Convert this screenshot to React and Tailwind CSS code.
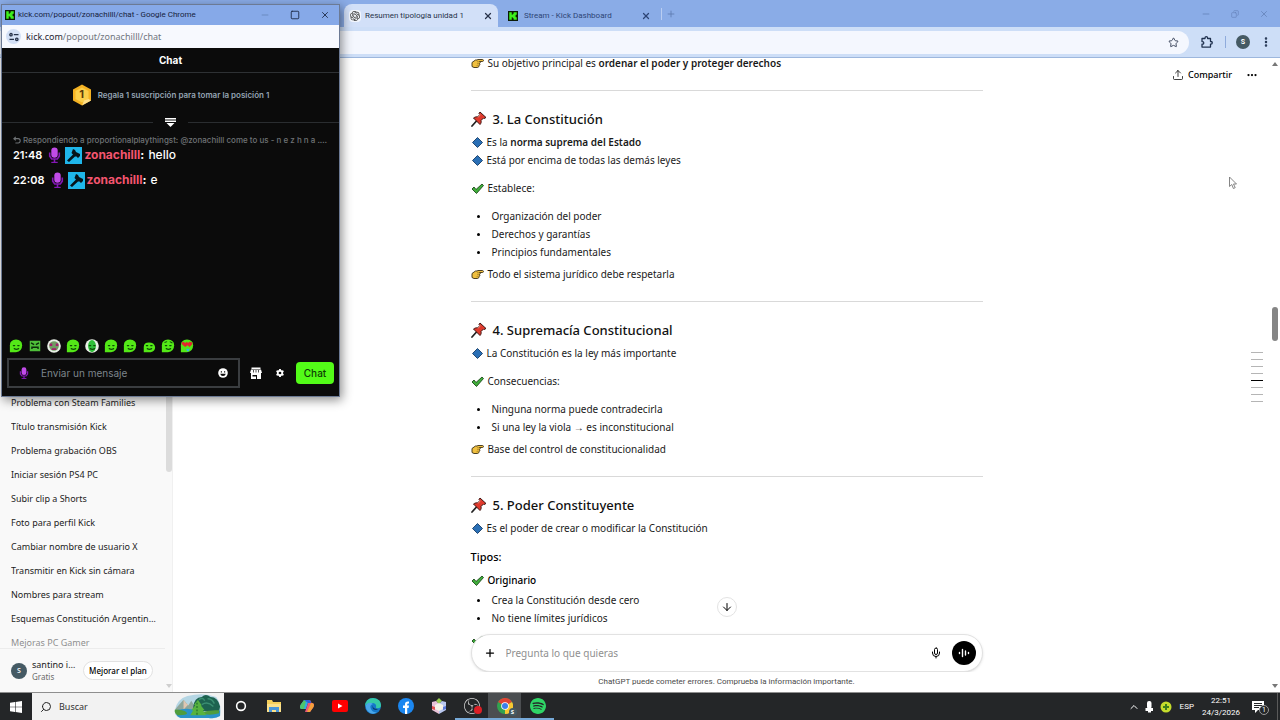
import React, { useState } from 'react';
import { ArrowDown, ChevronUp, Minus, Plus, Square, Star, Upload, X, Mic, Ellipsis, EllipsisVertical, Search, Copy } from 'lucide-react';
import { SiObsstudio, SiOpenai, SiSpotify } from 'react-icons/si';

const chats = [
    'Problema con Steam Families',
    'Título transmisión Kick',
    'Problema grabación OBS',
    'Iniciar sesión PS4 PC',
    'Subir clip a Shorts',
    'Foto para perfil Kick',
    'Cambiar nombre de usuario X',
    'Transmitir en Kick sin cámara',
    'Nombres para stream',
    'Esquemas Constitución Argentina 1853',
    'Mejoras PC Gamer',
];

const messages = [
    { time: '21:48', user: 'zonachilll', text: 'hello', reply: 'Respondiendo a proportionalplaythingst: @zonachilll come to us - n e z h n a . com' },
    { time: '22:08', user: 'zonachilll', text: 'e' },
];

const emotes = ['flat', 'box', 'clown', 'flat', 'phones', 'smile', 'smile', 'small', 'think', 'love'];

/* ---------- icons ---------- */

const KickLogo = ({ className }) => (
    <svg viewBox="0 0 16 16" className={className} aria-hidden="true">
        <rect width="16" height="16" fill="#0b1a06" />
        <path d="M2 2h4v4h1.5V4.500H9V2h5v4h-1.500v1.500H11v1h1.500V10H14v4H9v-2.500H7.500V10H6v4H2z" fill="#3df01d" />
    </svg>
);

const Hand = () => (
    <svg viewBox="0 0 26 24" className="h-3 w-[13px] shrink-0" aria-hidden="true">
        <path d="M2 11l7-5h3l2-1h9c2.500 0 2.500 4 0 4h-6c2 .5 2 3.500 0 4 1 1 1 3.500-1 4 0 2-1 4-3 4H6l-4-2z" fill="#f0c040" stroke="#3a2f14" strokeWidth="1.800" strokeLinejoin="round" />
        <path d="M12 9.500h5M12 13.500h4M11 17.500h4" stroke="#8a6a1a" strokeWidth="1.200" />
    </svg>
);

const Pin = () => (
    <svg viewBox="0 0 32 32" className="size-4 shrink-0" aria-hidden="true">
        <path d="M11 20L2 30" stroke="#222" strokeWidth="3.500" strokeLinecap="round" />
        <path d="M18 2l12 11-4 2-1-1-5 5c1 3 0 6-2 8L5 14c3-2 6-3 8-2l5-5-2-2z" fill="#e0392c" stroke="#3a1512" strokeWidth="2" strokeLinejoin="round" />
        <path d="M19 7l-5 6" stroke="#ff8a78" strokeWidth="2" />
    </svg>
);

const Diamond = () => (
    <svg viewBox="0 0 22 22" className="ml-px size-[11px] shrink-0" aria-hidden="true">
        <path d="M11 1l10 10-10 10L1 11z" fill="#2a6fb5" stroke="#163c66" strokeWidth="1.800" strokeLinejoin="round" />
    </svg>
);

const Check = () => (
    <svg viewBox="0 0 26 22" className="h-[11px] w-[13px] shrink-0" aria-hidden="true">
        <path d="M2 12l4-4 4 5L22 2l3 3-14 16z" fill="#3fae3a" stroke="#1d4a1b" strokeWidth="1.800" strokeLinejoin="round" />
    </svg>
);

const ReplyIcon = () => (
    <svg viewBox="0 0 10 10" className="size-2 shrink-0" fill="none" stroke="currentColor" strokeWidth="1.300" aria-hidden="true">
        <path d="M3.500 1L1 3.300l2.500 2.300M1 3.300h5.500q2.500 0 2.500 2.700t-2.500 2.700H3" />
    </svg>
);

const StreamerBadge = ({ className }) => (
    <svg viewBox="0 0 16 20" className={className} aria-hidden="true">
        <path d="M1 7v5l3 4h3v4h2v-4h3l3-4V7h-2v4l-2 3H5l-2-3V7z" fill="#8417b5" />
        <rect x="4" y="0.500" width="8" height="13" rx="4" fill="#c14be8" />
        <path d="M4 18.500h8V20H4z" fill="#8417b5" />
    </svg>
);

const ModBadge = () => (
    <svg viewBox="0 0 17 17" className="size-[17px] shrink-0" aria-hidden="true">
        <rect width="17" height="17" fill="#1fb6ea" />
        <path d="M8 2l2 1 1 2 4 2v2l-2 2-1.500-1.500L10 9.500 4 15l-2-1.500L8 7.500 6.500 6z" fill="#06131a" />
    </svg>
);

const RankBadge = () => (
    <svg viewBox="0 0 20 22" className="h-[22px] w-5" aria-hidden="true">
        <path d="M10 0.500l9 5v11l-9 5-9-5v-11z" fill="#f4b223" />
        <path d="M10 3.500l6.500 3.500v8L10 18.500 3.500 15V7z" fill="#fbcf4a" />
        <path d="M19 16.500l-9 5 2-5 4.500-1.500z" fill="#ffe08a" />
    </svg>
);

function Emote({ kind }) {
    const body = kind === 'small'
        ? <path d="M2 15V9q0-5 6-5t7 5q0 5-5 6z" fill="#53e817" />
        : kind === 'box'
            ? <path d="M2 2h12v12H2z" fill="#4fbf3a" />
            : <path d="M1 15V7q0-6 7-6.500Q15 1 15 7q0 7-7 8z" fill="#53e817" />;
    return (
        <svg viewBox="0 0 16 16" className="size-[14px]" aria-hidden="true">
            {(kind === 'clown' || kind === 'phones') && <circle cx="8" cy="8" r="7.800" fill="#e8efe6" />}
            {kind === 'clown' ? <circle cx="8" cy="8" r="5.500" fill="#6f9d63" /> : kind === 'phones' ? <ellipse cx="8" cy="8" rx="4.500" ry="7" fill="#2fbf3a" /> : body}
            {kind === 'love' && <path d="M2 4l2-1 2 1.500L8 3l1 1.500L11 3l3 1v2l-3 3-2.500-2L6 9 2 6z" fill="#e3262e" />}
            {kind === 'love' && <path d="M7 11h4l-1 3H8z" fill="#35b9d8" />}
            {kind === 'clown' && <path d="M3 5h3v3H3zM10 5h3v3h-3zM5.500 10.500h5v2h-5z" fill="#a21d6c" />}
            {kind === 'box' && <path d="M3.500 4.500l3.500 2M12.500 4.500L9 6.500M4.500 11.500v-2h7v2" stroke="#0b2b08" strokeWidth="1.600" fill="none" />}
            {!['love', 'clown', 'box'].includes(kind) && <path d="M5 7.500h1.500M10 7.500h1.500M6 11q2.500 1.500 5 0" stroke="#0d4a06" strokeWidth="1.400" fill="none" strokeLinecap="round" />}
            {kind === 'think' && <path d="M4 4l3-1M10 3l3 1.500" stroke="#0d4a06" strokeWidth="1.200" />}
        </svg>
    );
}

const SmileIcon = () => (
    <svg viewBox="0 0 10 10" className="size-[10px]" aria-hidden="true">
        <circle cx="5" cy="5" r="4.800" fill="#fff" />
        <path d="M2.800 3.200h1.200v1.200H2.800zM6 3.200h1.200v1.200H6zM2.200 5.700h5.600Q7.300 8 5 8T2.200 5.700z" fill="#0b0b0b" />
    </svg>
);

const ShopIcon = () => (
    <svg viewBox="0 0 12 12" className="size-3" aria-hidden="true">
        <path d="M1.500 0.500h9V2h-9zM1 2.500h10l1 3.500h-1v6H7V8H5v0H2.500v1.500H6V12H1V6H0z" fill="#fff" />
        <path d="M3.500 3v2.500M6 3v2.500M8.500 3v2.500" stroke="#0b0b0b" strokeWidth="0.700" />
    </svg>
);

const GearIcon = () => (
    <svg viewBox="0 0 10 10" className="size-2" aria-hidden="true">
        <path d="M4 0h2l.4 1.400 1 .5L8.800 1.500l1 1.700L8.800 4.300v1.400l1 1.100-1 1.700-1.400-.4-1 .5L6 10H4l-.4-1.400-1-.5-1.400.4-1-1.700 1-1.100V4.300l-1-1.100 1-1.700 1.400.4 1-.5z" fill="#fff" />
        <circle cx="5" cy="5" r="1.700" fill="#0b0b0b" />
    </svg>
);

const PuzzleIcon = () => (
    <svg viewBox="0 0 12 12" className="size-3" fill="none" stroke="#20324f" strokeWidth="1.300" aria-hidden="true">
        <path d="M1 2.500h3V2a1.300 1.300 0 0 1 2.600 0v.5H9.500V5.500H10a1.300 1.300 0 0 1 0 2.600h-.5v3H1V8.200h.5a1.300 1.300 0 0 0 0-2.600H1z" strokeLinejoin="round" />
    </svg>
);

const SiteInfoIcon = () => (
    <svg viewBox="0 0 10 10" className="size-2.5" fill="none" stroke="#26324a" strokeWidth="1.300" aria-hidden="true">
        <circle cx="2" cy="2.700" r="1.200" /><path d="M4.800 2.700H9.500M0.500 7.300h4.500" /><circle cx="7.800" cy="7.300" r="1.200" />
    </svg>
);

/* ---------- browser ---------- */

function Tab({ title, icon, active }) {
    return (
        <div className={active
            ? 'flex h-[23px] w-[154px] items-center self-end rounded-t-lg bg-[#d2e0f8] px-[5px] text-[#28334a]'
            : 'flex h-[23px] w-[163px] items-center self-end px-2.5 text-[#2d4576]'}>
            {icon}
            <span className="min-w-0 flex-1 truncate text-[8px]">{title}</span>
            <button aria-label="Cerrar pestaña"><X className="size-2.5" strokeWidth={3} /></button>
        </div>
    );
}

function BrowserBar() {
    return (
        <header className="shrink-0 font-[Roboto,sans-serif]">
            <div className="flex h-[27px] items-center bg-[#8aace7] pl-[344px]">
                <Tab active title="Resumen tipología unidad 1" icon={<span className="mr-1 flex size-3 shrink-0 items-center justify-center rounded-sm bg-white/70"><SiOpenai className="size-2.5 text-[#333]" /></span>} />
                <Tab title="Stream - Kick Dashboard" icon={<KickLogo className="mr-1.5 size-2.5 shrink-0" />} />
                <span className="h-3 w-px bg-[#b9cdf2]" />
                <button className="ml-1 text-[#5f7bb0]" aria-label="Nueva pestaña"><Plus className="size-2.5" /></button>
                <div className="ml-auto flex items-center gap-5 pr-[11px] text-[#6684bb]">
                    <button aria-label="Minimizar"><Minus className="size-2.5" /></button>
                    <button aria-label="Restaurar"><Copy className="size-2 -scale-x-100" /></button>
                    <button aria-label="Cerrar"><X className="size-2.5" /></button>
                </div>
            </div>
            <div className="flex h-[31px] items-center border-b border-[#9db7dd] bg-[#cddef7] pt-1 pr-2 pb-1">
                <div className="flex h-[23px] flex-1 items-center justify-end rounded-r-full bg-[#f4f7fe] pr-2.5">
                    <button aria-label="Añadir a marcadores"><Star className="size-[11px] text-[#333e55]" /></button>
                </div>
                <button className="ml-3" aria-label="Extensiones"><PuzzleIcon /></button>
                <span className="ml-3 h-3 w-px bg-[#8fabdc]" />
                <button className="ml-2.5 size-[14px] rounded-full bg-[#455a64] text-[7px] leading-[14px] font-bold text-white">S</button>
                <button className="ml-2.5 text-[#20324f]" aria-label="Menú"><EllipsisVertical className="size-3" strokeWidth={3} /></button>
            </div>
        </header>
    );
}

function Sidebar() {
    return (
        <aside className="flex w-[173px] shrink-0 bg-[#f9f9f9]">
            <div className="flex min-w-0 flex-1 flex-col">
                <div className="flex min-h-0 flex-1 flex-col justify-end overflow-hidden">
                    <ul className="-mb-[7px] shrink-0">
                        {chats.map((chat) => (
                            <li key={chat} className="h-6 pr-2 pl-[11px] last:opacity-50">
                                <a href="#" className="block truncate text-[9px] leading-6 text-[#1c1c1c]">{chat}</a>
                            </li>
                        ))}
                    </ul>
                </div>
                <div className="flex h-11 items-center border-t border-[#ececec] pl-[11px]">
                    <span className="size-4 shrink-0 rounded-full bg-[#455a64] text-center text-[7px] leading-4 font-semibold text-white">S</span>
                    <div className="ml-[5px] w-[46px]">
                        <p className="truncate text-[9px] leading-3 text-[#1c1c1c]">santino ibarra</p>
                        <p className="text-[8px] leading-3 text-[#6b6b6b]">Gratis</p>
                    </div>
                    <button className="ml-[5px] h-[19px] w-[70px] shrink-0 rounded-full border border-[#e2e2e2] bg-white text-[8px] font-medium whitespace-nowrap text-black">Mejorar el plan</button>
                </div>
            </div>
            <div className="flex w-2 flex-col items-center justify-between border-r border-[#f0f0f0] pb-1">
                <div className="h-[414px] w-1.5 rounded-b-full bg-[#dcdcdc]" />
                <span className="border-x-[3px] border-t-4 border-x-transparent border-t-[#cfcfcf]" />
            </div>
        </aside>
    );
}

const Line = ({ icon, children }) => (
    <span className="flex items-center gap-1">{icon}<span>{children}</span></span>
);
const Heading = ({ children }) => (
    <h2 className="mb-0.5 flex items-center gap-1.5 text-[13px] leading-6 font-medium text-[#111]"><Pin />{children}</h2>
);
const List = ({ items, className }) => (
    <ul className={className}>
        {items.map((item) => (
            <li key={item} className="flex items-center gap-3 pl-1.5"><span className="size-[3px] rounded-full bg-black" />{item}</li>
        ))}
    </ul>
);
const Rule = () => <hr className="mt-[18px] mb-4 border-[#d9d9d9]" />;

function Article() {
    return (
        <article className="mx-auto -mt-1 w-full max-w-[512px] text-[10px] leading-[18px] text-[#1a1a1a]">
            <Line icon={<Hand />}>Su objetivo principal es <b className="font-semibold">ordenar el poder y proteger derechos</b></Line>
            <Rule />
            <Heading>3. La Constitución</Heading>
            <Line icon={<Diamond />}>Es la <b className="font-semibold">norma suprema del Estado</b></Line>
            <Line icon={<Diamond />}>Está por encima de todas las demás leyes</Line>
            <p className="mt-2.5"><Line icon={<Check />}>Establece:</Line></p>
            <List className="mt-2.5 mb-1" items={['Organización del poder', 'Derechos y garantías', 'Principios fundamentales']} />
            <Line icon={<Hand />}>Todo el sistema jurídico debe respetarla</Line>
            <Rule />
            <Heading>4. Supremacía Constitucional</Heading>
            <Line icon={<Diamond />}>La Constitución es la ley más importante</Line>
            <p className="mt-2.5"><Line icon={<Check />}>Consecuencias:</Line></p>
            <List className="mt-2.5 mb-1" items={['Ninguna norma puede contradecirla', 'Si una ley la viola → es inconstitucional']} />
            <Line icon={<Hand />}>Base del control de constitucionalidad</Line>
            <Rule />
            <Heading>5. Poder Constituyente</Heading>
            <Line icon={<Diamond />}>Es el poder de crear o modificar la Constitución</Line>
            <h3 className="mt-2.5 mb-1 text-[11px] leading-5 font-medium text-black">Tipos:</h3>
            <p className="font-medium text-black"><Line icon={<Check />}>Originario</Line></p>
            <List className="mt-0.5 mb-1" items={['Crea la Constitución desde cero', 'No tiene límites jurídicos']} />
            <p className="font-medium text-black"><Line icon={<Check />}>Derivado</Line></p>
        </article>
    );
}

function Composer() {
    const [prompt, setPrompt] = useState('');
    return (
        <div className="absolute inset-x-0 bottom-0 flex flex-col items-center">
            <button className="mb-[17px] flex size-5 items-center justify-center rounded-full border border-[#e3e3e3] bg-white" aria-label="Bajar"><ArrowDown className="size-3" /></button>
            <form className="flex h-[38px] w-full max-w-[512px] items-center rounded-full border border-[#e2e2e2] bg-white pr-1.5 pl-3 shadow-sm" onSubmit={(e) => e.preventDefault()}>
                <button type="button" aria-label="Adjuntar"><Plus className="size-3" strokeWidth={2.5} /></button>
                <input
                    value={prompt}
                    onChange={(e) => setPrompt(e.target.value)}
                    aria-label="Pregunta lo que quieras"
                    placeholder="Pregunta lo que quieras"
                    className="ml-2.5 min-w-0 flex-1 bg-transparent text-[10px] outline-none placeholder:text-[#8f8f8f]"
                />
                <button type="button" aria-label="Dictar"><Mic className="size-3" /></button>
                <button type="button" className="ml-2.5 flex size-6 items-center justify-center rounded-full bg-black" aria-label="Modo de voz">
                    <svg viewBox="0 0 12 12" className="size-3" stroke="#fff" strokeWidth="1.400" strokeLinecap="round"><path d="M1.500 5.500v1M4.500 2.500v7M7.500 4v4M10.500 5.500v1" /></svg>
                </button>
            </form>
            <p className="flex h-5 w-full items-center justify-center bg-white font-[Roboto,sans-serif] text-[8px] text-[#4a4a4a]">ChatGPT puede cometer errores. Comprueba la información importante.</p>
        </div>
    );
}

function Main() {
    return (
        <main className="relative min-w-0 flex-1 overflow-hidden bg-white">
            <Article />
            <Composer />
            <div className="absolute top-2.5 right-[22px] flex items-center gap-3.5">
                <button className="flex items-center gap-1 text-[9px] font-medium text-black"><Upload className="size-3" strokeWidth={1.5} />Compartir</button>
                <button aria-label="Más opciones"><Ellipsis className="size-3" strokeWidth={2.5} /></button>
            </div>
            <div className="absolute top-[294px] right-[17px] flex flex-col gap-[6px]">
                {[0, 1, 2, 3, 4, 5, 6, 7].map((n) => (
                    <span key={n} className={n === 4 ? 'h-px w-3 bg-black' : 'h-px w-3 bg-[#b5b5b5]'} />
                ))}
            </div>
            <div className="absolute inset-y-0 right-0 flex w-2.5 flex-col items-center pt-1 pb-1">
                <span className="border-x-[3px] border-b-4 border-x-transparent border-b-[#777]" />
                <div className="mt-[241px] h-[34px] w-1.5 rounded-full bg-[#858585]" />
                <span className="mt-auto border-x-[3px] border-t-4 border-x-transparent border-t-[#777]" />
            </div>
            <svg viewBox="0 0 10 14" className="absolute top-[118px] right-[42px] h-3.5 w-2.5" fill="#fff" stroke="#777" strokeWidth="0.900" aria-hidden="true">
                <path d="M1.500 1v9.500l2.300-2 1.600 4 1.800-.8-1.700-3.700h3z" />
            </svg>
        </main>
    );
}

/* ---------- kick chat popout ---------- */

function ChatPopup() {
    const [text, setText] = useState('');
    return (
        <section className="absolute top-1 left-px flex h-[393px] w-[339px] flex-col border border-[#6c7a94] bg-[#0b0b0b] font-[Inter,sans-serif] text-white shadow-[2px_3px_10px_rgba(0,0,0,0.45)]">
            <div className="flex h-5 shrink-0 items-center bg-[#86a9e8] px-[3px] font-[Roboto,sans-serif] text-[#17233d]">
                <KickLogo className="size-2.5" />
                <span className="ml-[3px] flex-1 text-[8px]">kick.com/popout/zonachilll/chat - Google Chrome</span>
                <div className="flex items-center gap-5 pr-1.5">
                    <button aria-label="Minimizar"><Minus className="size-2.5 text-[#6684bb]" /></button>
                    <button aria-label="Maximizar"><Square className="size-2.5" /></button>
                    <button aria-label="Cerrar"><X className="size-2.5" /></button>
                </div>
            </div>
            <div className="flex h-[23px] shrink-0 items-center bg-[#f7f9fe] px-1 font-['Noto_Sans',sans-serif]">
                <span className="flex size-[15px] items-center justify-center rounded-full bg-[#d3e0f6]"><SiteInfoIcon /></span>
                <span className="ml-[5px] text-[9px] text-[#70757d]"><span className="text-[#1d2330]">kick.com</span>/popout/zonachilll/chat</span>
            </div>
            <h1 className="h-[25px] shrink-0 border-b border-[#2e3134] text-center text-[10px] leading-6 font-bold">Chat</h1>
            <div className="flex h-[43px] shrink-0 items-center justify-center gap-1.5">
                <span className="grid place-items-center *:col-start-1 *:row-start-1">
                    <RankBadge />
                    <span className="text-[11px] font-bold text-[#5a3908]">1</span>
                </span>
                <p className="text-[8px] font-semibold text-[#94a3b3]">Regala 1 suscripción para tomar la posición 1</p>
            </div>
            <div className="flex h-3 shrink-0 items-center gap-3">
                <span className="h-px flex-1 bg-[#2a2d30]" />
                <svg viewBox="0 0 11 9" className="h-[9px] w-[11px]" fill="#fff" aria-hidden="true"><path d="M0 0h11v1.500H0zM0 2.500h11V4H0zM1.500 5h8l-4 4z" /></svg>
                <span className="h-px flex-1 bg-[#2a2d30]" />
            </div>
            <ul className="flex min-h-0 flex-1 flex-col gap-[7px] px-[11px] pt-1.5">
                {messages.map((m) => (
                    <li key={m.time}>
                        {m.reply && (
                            <p className="flex items-center gap-0.5 text-[8px] leading-3 font-medium text-[#6f7376]">
                                <ReplyIcon />
                                <span className="truncate">{m.reply}</span>
                            </p>
                        )}
                        <p className="flex items-center text-xs leading-[18px] font-medium">
                            <span className="text-[11px] font-semibold">{m.time}</span>
                            <StreamerBadge className="mr-1 ml-1.5 h-4 w-[13px]" />
                            <ModBadge />
                            <span className="ml-0.5 font-bold text-[#f4556f]">{m.user}</span>
                            <span className="mr-1 font-bold">:</span>{m.text}
                        </p>
                    </li>
                ))}
            </ul>
            <div className="flex h-5 shrink-0 items-center gap-[5px] px-[7px]">
                {emotes.map((kind, i) => <button key={i} aria-label={`Emote ${i + 1}`}><Emote kind={kind} /></button>)}
            </div>
            <form className="flex shrink-0 items-center pt-0.5 pr-[5px] pb-2 pl-[5px]" onSubmit={(e) => e.preventDefault()}>
                <div className="flex h-[30px] min-w-0 flex-1 items-center border-2 border-[#3a3d40] px-2.5">
                    <StreamerBadge className="h-3 w-2.5" />
                    <input
                        value={text}
                        onChange={(e) => setText(e.target.value)}
                        aria-label="Enviar un mensaje"
                        placeholder="Enviar un mensaje"
                        className="ml-3 min-w-0 flex-1 bg-transparent text-[10px] outline-none placeholder:text-[#7d858c]"
                    />
                    <button type="button" aria-label="Emotes"><SmileIcon /></button>
                </div>
                <button type="button" className="ml-2.5" aria-label="Tienda"><ShopIcon /></button>
                <button type="button" className="ml-3.5" aria-label="Ajustes"><GearIcon /></button>
                <button className="ml-3 h-[22px] w-[38px] rounded-sm bg-[#53fc18] text-[10px] font-medium text-[#0d3d05]">Chat</button>
            </form>
        </section>
    );
}

/* ---------- taskbar ---------- */

const apps = [
    { name: 'Cortana', icon: <svg viewBox="0 0 16 16" className="size-3.5"><circle cx="8" cy="8" r="5" fill="none" stroke="#fff" strokeWidth="1.800" /></svg> },
    { name: 'Explorador', icon: <svg viewBox="0 0 16 16" className="size-4"><path d="M1 2h5l1 2h8v10H1z" fill="#f5cf5b" /><path d="M1 6h14v8H1z" fill="#fbe08a" /><path d="M3 14V9h10v5h-3v-2H6v2z" fill="#4a96d9" /></svg> },
    { name: 'Copilot', icon: <svg viewBox="0 0 16 16" className="size-4"><path d="M5 2h5l-3 9H3Q0 11 1.500 7z" fill="#2fa8e8" /><path d="M1.500 7L5 2l2 1-2 8H3Q0 11 1.500 7z" fill="#4dc36b" /><path d="M10 2q2 0 2.500 3H13q3 0 1.500 4L11 14H6l3-9z" fill="#e8557a" /><path d="M12 5q4 0 2.500 4L11 14H8z" fill="#f6a13a" /><path d="M5 2h5q2 0 2 3H9z" fill="#2c5fd8" /></svg> },
    { name: 'YouTube', icon: <svg viewBox="0 0 16 12" className="h-3 w-4"><rect width="16" height="12" rx="2" fill="#f00" /><path d="M6 3.500v5l4.500-2.500z" fill="#fff" /></svg> },
    { name: 'Edge', icon: <svg viewBox="0 0 16 16" className="size-4"><circle cx="8" cy="8" r="8" fill="#1577c9" /><path d="M0 8q1-8 8-8 8 1 8 7 0 4-5 3 1-5-4-5Q2 5 0 8z" fill="#35c9a6" /><path d="M1 7q3-4 7-1-4 1-2 5 2 4 6 3-3 3-7 1Q0 12 1 7z" fill="#4aa7ea" /><path d="M8 7q-1 4 5 4-2 2-5 0-1-2 0-4z" fill="#0b3a6e" /></svg> },
    { name: 'Facebook', icon: <svg viewBox="0 0 16 16" className="size-4"><circle cx="8" cy="8" r="8" fill="#1b87f0" /><path d="M7 16v-6H5V7.500h2V6q0-3 4-2.500v2q-2-.3-1.800 1v1H11l-.4 2.500H9.200V16z" fill="#fff" /></svg> },
    { name: 'Apps', icon: <svg viewBox="0 0 16 16" className="size-4"><path d="M8 0l3 3-3 3-3-3z" fill="#9ad04f" /><path d="M1 4l4-1 3 3v10l-7-4z" fill="#e9c3d8" /><path d="M15 4l-4-1-3 3v10l7-4z" fill="#b9c7ef" /><path d="M8 5l4 2v4l-4 2-4-2V7z" fill="#f7f3e8" /><path d="M1 8l3 1v3l-3-1z" fill="#df5050" /><path d="M15 8l-3 1v3l3-1z" fill="#5a78d8" /></svg> },
    { name: 'OBS', running: true, icon: <span className="relative"><SiObsstudio className="size-4 text-[#d8d8d8]" /><span className="absolute -right-0.5 bottom-0 size-2 rounded-full bg-[#dc1f26]" /></span> },
    { name: 'Chrome', running: true, active: true, icon: <span className="relative"><svg viewBox="0 0 16 16" className="size-4"><circle cx="8" cy="8" r="8" fill="#32a350" /><path d="M8 8L1.100 4A8 8 0 0 1 15 4z" fill="#e04335" /><path d="M8 8l7-4a8 8 0 0 1-7 12z" fill="#f9c831" /><circle cx="8" cy="8" r="3.800" fill="#fff" /><circle cx="8" cy="8" r="3" fill="#3c7fec" /></svg><span className="absolute -right-1 -bottom-0.5 size-2 rounded-full bg-[#455a64] text-center text-[6px] leading-2 font-bold text-white">S</span></span> },
    { name: 'Spotify', running: true, icon: <SiSpotify className="size-4 text-[#2fd566]" /> },
];

function Taskbar() {
    return (
        <footer className="flex h-7 shrink-0 items-stretch border-t border-[#8e8e8e] bg-[#242628] text-white">
            <button className="flex w-8 items-center justify-center" aria-label="Inicio">
                <svg viewBox="0 0 12 12" className="size-3" fill="#fff"><path d="M0 1.800l5-.7v4.600H0zM5.600 1l6.400-.9v5.600H5.600zM0 6.300h5v4.600l-5-.7zM5.600 6.300H12v5.600l-6.400-.9z" /></svg>
            </button>
            <div className="flex w-48 items-center bg-[#f2f2f2] pl-2 text-[#222]">
                <Search className="size-3 -scale-x-100" />
                <input aria-label="Buscar" placeholder="Buscar" className="ml-[7px] min-w-0 flex-1 bg-transparent text-[9px] outline-none placeholder:text-[#333]" />
                <svg viewBox="0 0 50 26" className="mr-0.5 h-[25px] w-[50px]" aria-hidden="true">
                    <path d="M2 17Q4 5 15 2q17-4 30 1 6 8 4 19-4 4-12 3H8q-7-2-6-8z" fill="#b5d6e4" />
                    <path d="M3 15l8-9 5 6 3-5 6 9-4 5H3z" fill="#8fa69b" />
                    <path d="M11 6l3 4 2 1-5 5z" fill="#dfc6b2" />
                    <path d="M21 14Q22 3 30 3q4-4 9 0 8 0 10 10l-1 5H21z" fill="#1d6350" />
                    <path d="M27 6q4-3 6 1M36 5q5 0 7 5M30 11q6-4 12 2" stroke="#3b8f72" strokeWidth="1.500" fill="none" />
                    <path d="M3 17q14-4 24 1t22-1v6q-4 3-12 2H8q-5-1-5-8z" fill="#2a93c9" />
                    <path d="M2 16q9 0 12 3t-9 3q-4-2-3-6zM28 20q9-4 20-3v3q-10 3-20 0z" fill="#4f9d3d" />
                    <path d="M18 22l3-5-2 0 4-5-1-1 4-5 4 6-1 0 4 5-2 0 4 5z" fill="#57b33f" />
                    <path d="M25 9v14" stroke="#2b7a2f" strokeWidth="1.500" strokeDasharray="2 1.500" />
                </svg>
            </div>
            {apps.map((app) => (
                <button key={app.name} aria-label={app.name} className={`flex w-[33px] items-center justify-center border-b-2 ${app.running ? 'border-[#76a9d8]' : 'border-transparent'} ${app.active ? 'bg-[#4b4e51]' : ''}`}>
                    {app.icon}
                </button>
            ))}
            <div className="ml-auto flex items-center font-[Roboto,sans-serif]">
                <button aria-label="Iconos ocultos"><ChevronUp className="size-3" /></button>
                <svg viewBox="0 0 10 12" className="ml-1 h-3 w-2.5" fill="#fff" aria-hidden="true"><rect x="3" y="0" width="4.500" height="8" rx="2" /><path d="M1.500 7h7.500v3h-2v1.500h-3V10h-2.500z" /></svg>
                <svg viewBox="0 0 12 12" className="ml-1.5 size-3" aria-hidden="true"><circle cx="6" cy="6" r="5.500" fill="#c4dc2c" /><path d="M6 3v6M3 6h6" stroke="#3c7d1b" strokeWidth="2" /></svg>
                <span className="ml-2 text-[8px]">ESP</span>
                <div className="ml-2 text-center text-[8px] leading-3"><p>22:51</p><p>24/3/2026</p></div>
                <button className="relative ml-3" aria-label="Notificaciones">
                    <svg viewBox="0 0 13 13" className="size-[13px]"><path d="M0 1h12v9H6l-3 3v-3H0z" fill="#fff" /><path d="M2 3.500h8M2 5.500h8M2 7.500h5" stroke="#242628" /></svg>
                    <span className="absolute -right-1 -bottom-0.5 size-2.5 rounded-full border border-[#9a9a9a] bg-[#242628] text-[7px] leading-2">1</span>
                </button>
                <span className="ml-3 h-full w-[3px] border-l border-[#5a5a5a]" />
            </div>
        </footer>
    );
}

export default function App() {
    return (
        <div className="relative flex h-screen flex-col overflow-hidden bg-white font-['Noto_Sans',sans-serif]">
            <BrowserBar />
            <div className="flex min-h-0 flex-1">
                <Sidebar />
                <Main />
            </div>
            <Taskbar />
            <ChatPopup />
        </div>
    );
}
